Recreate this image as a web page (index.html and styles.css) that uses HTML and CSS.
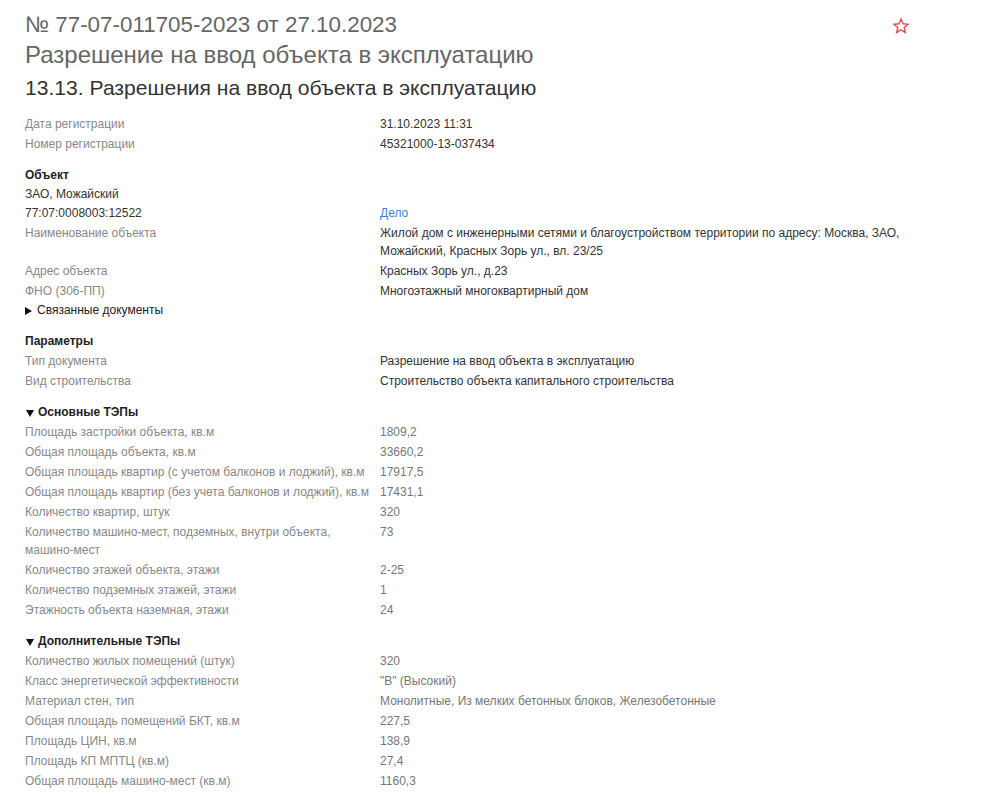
FILE: index.html
```html
<!DOCTYPE html>
<html lang="ru">
<head>
<meta charset="utf-8">
<title>Разрешение на ввод объекта в эксплуатацию</title>
<link rel="stylesheet" href="styles.css">
</head>
<body>
<div class="page">
  <header class="head">
    <div class="titles">
      <h1 class="t1">№ 77-07-011705-2023 от 27.10.2023</h1>
      <div class="t2">Разрешение на ввод объекта в эксплуатацию</div>
      <h2 class="t3">13.13. Разрешения на ввод объекта в эксплуатацию</h2>
    </div>
    <button class="star" aria-label="Избранное">
      <svg width="18" height="18" viewBox="0 0 24 24"><path d="M12 2.8l2.7 6.2 6.7.6-5.1 4.4 1.5 6.6L12 17.1l-5.8 3.5 1.5-6.6-5.1-4.4 6.7-.6z" fill="none" stroke="#d9534f" stroke-width="1.9" stroke-linejoin="miter"/></svg>
    </button>
  </header>

  <section class="sec first">
    <div class="grid">
      <div class="lbl">Дата регистрации</div><div class="val">31.10.2023 11:31</div>
      <div class="lbl">Номер регистрации</div><div class="val">45321000-13-037434</div>
    </div>
  </section>

  <section class="sec">
    <div class="sh">Объект</div>
    <div class="grid">
      <div class="dark">ЗАО, Можайский</div><div class="val tight"></div>
      <div class="dark">77:07:0008003:12522</div><div class="val tight"><a class="link" href="#">Дело</a></div>
      <div class="lbl">Наименование объекта</div><div class="val">Жилой дом с инженерными сетями и благоустройством территории по адресу: Москва, ЗАО, Можайский, Красных Зорь ул., вл. 23/25</div>
      <div class="lbl">Адрес объекта</div><div class="val">Красных Зорь ул., д.23</div>
      <div class="lbl">ФНО (306-ПП)</div><div class="val">Многоэтажный многоквартирный дом</div>
    </div>
    <details class="rel">
      <summary>Связанные документы</summary>
    </details>
  </section>

  <section class="sec">
    <div class="sh">Параметры</div>
    <div class="grid">
      <div class="lbl">Тип документа</div><div class="val">Разрешение на ввод объекта в эксплуатацию</div>
      <div class="lbl">Вид строительства</div><div class="val">Строительство объекта капитального строительства</div>
    </div>
  </section>

  <details class="sec tep" open>
    <summary class="sh">Основные ТЭПы</summary>
    <div class="grid grey">
      <div class="lbl">Площадь застройки объекта, кв.м</div><div class="val">1809,2</div>
      <div class="lbl">Общая площадь объекта, кв.м</div><div class="val">33660,2</div>
      <div class="lbl">Общая площадь квартир (с учетом балконов и лоджий), кв.м</div><div class="val">17917,5</div>
      <div class="lbl">Общая площадь квартир (без учета балконов и лоджий), кв.м</div><div class="val">17431,1</div>
      <div class="lbl">Количество квартир, штук</div><div class="val">320</div>
      <div class="lbl">Количество машино-мест, подземных, внутри объекта, машино-мест</div><div class="val">73</div>
      <div class="lbl">Количество этажей объекта, этажи</div><div class="val">2-25</div>
      <div class="lbl">Количество подземных этажей, этажи</div><div class="val">1</div>
      <div class="lbl">Этажность объекта наземная, этажи</div><div class="val">24</div>
    </div>
  </details>

  <details class="sec tep" open>
    <summary class="sh">Дополнительные ТЭПы</summary>
    <div class="grid grey">
      <div class="lbl">Количество жилых помещений (штук)</div><div class="val">320</div>
      <div class="lbl">Класс энергетической эффективности</div><div class="val">"В" (Высокий)</div>
      <div class="lbl">Материал стен, тип</div><div class="val">Монолитные, Из мелких бетонных блоков, Железобетонные</div>
      <div class="lbl">Общая площадь помещений БКТ, кв.м</div><div class="val">227,5</div>
      <div class="lbl">Площадь ЦИН, кв.м</div><div class="val">138,9</div>
      <div class="lbl">Площадь КП МПТЦ (кв.м)</div><div class="val">27,4</div>
      <div class="lbl">Общая площадь машино-мест (кв.м)</div><div class="val">1160,3</div>
    </div>
  </details>
</div>
</body>
</html>
```

FILE: styles.css
```css
* { box-sizing: border-box; }
html, body {
  margin: 0;
  background: #fff;
}
body {
  font-family: "Liberation Sans", Arial, sans-serif;
  font-size: 12px;
  color: #333;
}
.page {
  width: 910px;
  padding: 10px 0 20px 25px;
}
.head {
  display: flex;
  justify-content: space-between;
  align-items: flex-start;
}
.t1, .t2 {
  margin: 0;
  font-weight: normal;
  font-size: 24px;
  line-height: 30px;
  color: #666;
}
.t1 {
  font-size: 22.4px;
}
.t3 {
  margin: 5px 0 0;
  font-weight: normal;
  font-size: 21.1px;
  line-height: 26px;
  color: #333;
}
.star {
  border: 0;
  background: none;
  padding: 0;
  margin: 5px -2px 0 0;
  width: 22px;
  height: 22px;
  display: flex;
  align-items: center;
  justify-content: center;
}
.sec {
  margin-top: 12px;
}
.sec.first {
  margin-top: 13px;
}
.grid {
  display: grid;
  grid-template-columns: 355px 1fr;
}
.grid > div {
  padding: 1px 0;
  line-height: 18px;
}
.grid > .dark,
.grid > .tight {
  line-height: 17px;
}
.lbl { color: #888; padding-right: 20px; }
.val { color: #333; }
.dark { color: #333; }
.grey .val { color: #777; }
.link { color: #3d7fe6; text-decoration: none; }
.sh {
  display: block;
  font-weight: bold;
  color: #222;
  line-height: 19px;
}
summary,
.tep > summary.sh {
  list-style: none;
  cursor: pointer;
  display: flex;
  align-items: center;
}
summary::-webkit-details-marker { display: none; }
summary::before {
  content: "";
  width: 0;
  height: 0;
  border-left: 7px solid #111;
  border-top: 4px solid transparent;
  border-bottom: 4px solid transparent;
  margin: 0 5px 0 0;
}
details[open] > summary::before {
  border-top: 7px solid #111;
  border-left: 4px solid transparent;
  border-right: 4px solid transparent;
  border-bottom: 0;
  margin: 1px 4px 0 0;
}
.rel summary {
  color: #222;
  line-height: 19px;
  padding-left: 0;
}
.tep > summary.sh { padding-left: 1px; }
```
